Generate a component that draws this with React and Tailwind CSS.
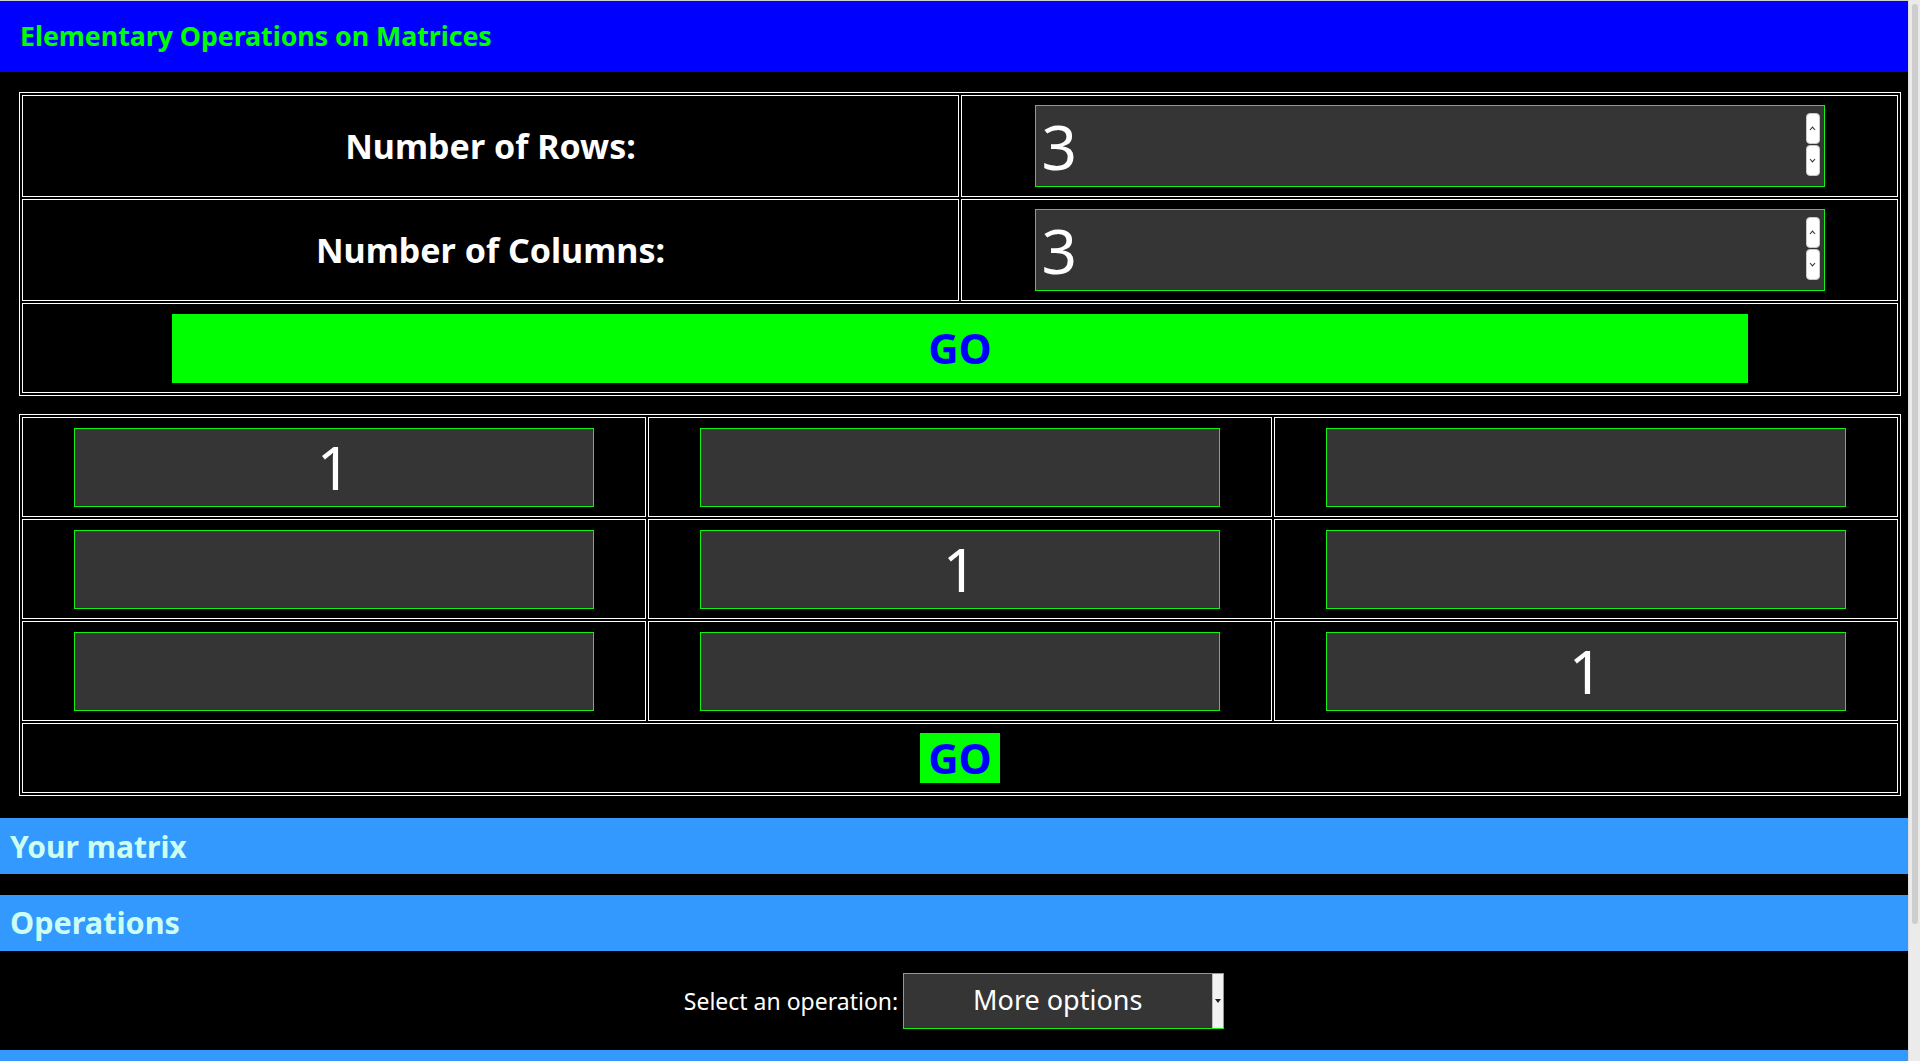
import { useState } from 'react';

const font = { fontFamily: '"Noto Sans", "Open Sans", sans-serif' };

const Chevron = ({ up }) => (
  <svg width="7" height="5" viewBox="0 0 7 5">
    <path d={up ? 'M1 4 L3.5 1.2 L6 4' : 'M1 1 L3.5 3.8 L6 1'} fill="none" stroke="#333" strokeWidth="1.1" />
  </svg>
);

const Spinner = () => (
  <div className="absolute right-[5px] top-[8px] flex flex-col gap-[1px]">
    <div className="w-[14px] h-[31px] bg-white rounded-[4px] border border-[#c8c8c8] flex items-center justify-center">
      <Chevron up />
    </div>
    <div className="w-[14px] h-[31px] bg-white rounded-[4px] border border-[#c8c8c8] flex items-center justify-center">
      <Chevron />
    </div>
  </div>
);

const SizeRow = ({ label, value }) => (
  <tr>
    <td className="border border-white h-[102px] text-center text-white font-bold text-[34px]">
      {label}
    </td>
    <td className="border border-white h-[102px]">
      <div className="relative w-[790px] h-[82px] mx-auto">
        <input
          type="text"
          defaultValue={value}
          className="w-full h-full bg-[#353535] border border-[#14f014] text-white text-[62px] leading-none pl-[6px] outline-none"
        />
        <Spinner />
      </div>
    </td>
  </tr>
);

const MatrixCell = ({ value }) => (
  <td className="border border-white h-[100px]">
    <input
      type="text"
      defaultValue={value}
      className="block w-[520px] h-[79px] mx-auto bg-[#353535] border border-[#14f014] text-white text-[60px] leading-none text-center outline-none"
    />
  </td>
);

const Bar = ({ children, size = 'text-[30px]' }) => (
  <div className={`h-[56px] bg-[#3399ff] flex items-center pl-[10px] text-[#ccfff2] font-bold ${size}`}>
    {children}
  </div>
);

export default function App() {
  const [rows] = useState(3);
  const [cols] = useState(3);
  const matrix = [
    ['1', '', ''],
    ['', '1', ''],
    ['', '', '1'],
  ];

  return (
    <div className="flex h-[1061px] overflow-hidden bg-black" style={font}>
      <div className="flex-1 min-w-0 border-t border-[#cfcfcf]">
        <div className="h-[71px] bg-[#0000ff] flex items-center pl-[20px]">
          <h1 className="text-[#00ff00] font-bold text-[26.7px]">Elementary Operations on Matrices</h1>
        </div>

        <table className="mt-[20px] ml-[19px] w-[1882px] table-fixed border-separate border-spacing-[2px] border border-white">
          <tbody>
            <SizeRow label="Number of Rows:" value={rows} />
            <SizeRow label="Number of Columns:" value={cols} />
            <tr>
              <td colSpan={2} className="border border-white h-[90px] text-center">
                <button className="w-[1576px] h-[69px] bg-[#00ff00] text-[#0000ff] font-bold text-[42px] leading-none">
                  GO
                </button>
              </td>
            </tr>
          </tbody>
        </table>

        <table className="mt-[18px] ml-[19px] w-[1882px] table-fixed border-separate border-spacing-[2px] border border-white">
          <tbody>
            {matrix.map((row, i) => (
              <tr key={i}>
                {row.map((v, j) => (
                  <MatrixCell key={j} value={v} />
                ))}
              </tr>
            ))}
            <tr>
              <td colSpan={3} className="border border-white h-[70px] text-center">
                <button className="w-[80px] h-[50px] bg-[#00ff00] text-[#0000ff] font-bold text-[42px] leading-none">
                  GO
                </button>
              </td>
            </tr>
          </tbody>
        </table>

        <div className="mt-[22px]">
          <Bar>Your matrix</Bar>
        </div>
        <div className="mt-[21px]">
          <Bar size="text-[30.6px]">Operations</Bar>
        </div>

        <div className="h-[99px] flex items-center justify-center">
          <div className="flex items-baseline gap-[5px]">
            <span className="text-white text-[23px]">Select an operation:</span>
            <div className="relative w-[321px] h-[56px] bg-[#353535] border border-[#14f014] flex items-center">
              <span className="flex-1 text-center text-white text-[27px] pr-[12px]">More options</span>
              <div className="absolute right-0 top-0 bottom-0 w-[11px] bg-[#f2f2f2] border-l border-[#bdbdbd] flex items-center justify-center">
                <svg width="6" height="4" viewBox="0 0 6 4">
                  <path d="M0 0 L6 0 L3 4 Z" fill="#222" />
                </svg>
              </div>
            </div>
          </div>
        </div>

        <div className="h-[56px] bg-[#3399ff]" />
      </div>

      <div className="w-[12px] bg-[#ebebeb] border-l border-[#dcdcdc] pt-[4px] flex justify-center">
        <div className="w-[6px] h-[920px] bg-[#cdcdcd] rounded-full" />
      </div>
    </div>
  );
}
